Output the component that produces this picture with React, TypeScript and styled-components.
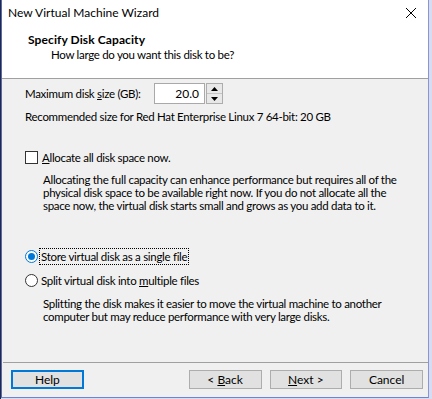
import React from "react";
import styled, { createGlobalStyle } from "styled-components";

const Global = createGlobalStyle`
  html, body { margin: 0; padding: 0; }
  body {
    width: 432px;
    height: 399px;
    overflow: hidden;
    background: #1d2a4b;
    font-family: Lato, "Liberation Sans", sans-serif;
    font-size: 11.5px;
    letter-spacing: -0.3px;
    color: #000;
  }
`;

const Desk = styled.div`
  display: flex;
  width: 432px;
  height: 399px;
  background: linear-gradient(to right, #1d2a4b 0 1px, #d8dcf0 1px);
`;

const Window = styled.div`
  box-sizing: border-box;
  margin-left: 1px;
  width: 428px;
  height: 398px;
  display: flex;
  flex-direction: column;
  background: #f0f0f0;
  border-left: 1px solid #5d6aa6;
  border-right: 1px solid #8a95d8;
  border-bottom: 1px solid #6f82d4;
  white-space: nowrap;
`;

const Header = styled.div`
  box-sizing: border-box;
  height: 79px;
  background: #fff;
  border-bottom: 1px solid #a0a0a0;
`;

const TitleBar = styled.div`
  height: 24px;
  display: flex;
  align-items: center;
  justify-content: space-between;
  padding-left: 6px;
  padding-right: 10px;
  line-height: 15px;
  font-size: 12px;
  letter-spacing: 0;
`;

const CloseBox = styled.div`
  width: 14px;
  height: 14px;
  margin-top: 2px;
  display: flex;
`;

const HeaderTitle = styled.div`
  margin-top: 8px;
  padding-left: 26px;
  font-weight: bold;
  font-size: 12px;
  letter-spacing: 0.1px;
  line-height: 15px;
`;

const HeaderSub = styled.div`
  padding-left: 49px;
  line-height: 15px;
`;

const Content = styled.div`
  flex: 1;
  padding: 0 12px 0 23px;
`;

const SizeRow = styled.div`
  margin-top: 4px;
  height: 21px;
  display: flex;
  align-items: center;
`;

const SizeLabel = styled.span`
  width: 129px;
  flex-shrink: 0;
`;

const NumberBox = styled.div`
  box-sizing: border-box;
  width: 51px;
  height: 21px;
  border: 1px solid #a9a9a9;
  background: #fff;
  text-align: right;
  padding-right: 5px;
  line-height: 19px;
  font-size: 12px;
  letter-spacing: 0;
`;

const Spinner = styled.div`
  box-sizing: border-box;
  width: 17px;
  height: 21px;
  margin-left: 1px;
  border: 1px solid #adadad;
  display: flex;
  flex-direction: column;
`;

const SpinHalf = styled.div<{ $top?: boolean }>`
  flex: 1;
  background: #e8e8e8;
  display: flex;
  align-items: center;
  justify-content: center;
  border-bottom: ${(p) => (p.$top ? "1px solid #c4c4c4" : "none")};
`;

const Text = styled.div<{ $mt: number }>`
  margin-top: ${(p) => p.$mt}px;
  line-height: 15px;
`;

const Para = styled.div<{ $mt: number }>`
  margin-top: ${(p) => p.$mt}px;
  padding-left: 18px;
  line-height: 13px;
`;

const OptionRow = styled.div<{ $mt: number }>`
  margin-top: ${(p) => p.$mt}px;
  height: 17px;
  display: flex;
  align-items: center;
`;

const CheckBox = styled.span`
  box-sizing: border-box;
  flex: none;
  width: 13px;
  height: 13px;
  border: 1px solid #333;
  background: #fff;
  margin-right: 3px;
`;

const Radio = styled.span<{ $on?: boolean }>`
  box-sizing: border-box;
  flex: none;
  width: 13px;
  height: 13px;
  border-radius: 50%;
  border: 1px solid ${(p) => (p.$on ? "#0078d7" : "#333")};
  background: #fff;
  margin-right: 2px;
  display: flex;
  align-items: center;
  justify-content: center;
  &::after {
    content: "";
    display: ${(p) => (p.$on ? "block" : "none")};
    width: 7px;
    height: 7px;
    border-radius: 50%;
    background: #0078d7;
  }
`;

const Label = styled.span<{ $focus?: boolean }>`
  line-height: 15px;
  padding: 0 1px;
  outline: ${(p) => (p.$focus ? "1px dotted #000" : "none")};
`;

const U = styled.span`
  text-decoration: underline;
`;

const Footer = styled.div`
  box-sizing: border-box;
  height: 35px;
  border-top: 1px solid #a0a0a0;
  margin-left: 1px;
  padding: 7px 5px 0 8px;
  display: flex;
  align-items: flex-start;
`;

const Button = styled.button<{ $def?: boolean; $ml?: number }>`
  box-sizing: border-box;
  width: 73px;
  height: 19px;
  margin-left: ${(p) => p.$ml ?? 0}px;
  padding: 0;
  font: inherit;
  font-size: 12px;
  letter-spacing: 0;
  line-height: 15px;
  color: #000;
  background: #e1e1e1;
  border: ${(p) => (p.$def ? "2px solid #0078d7" : "1px solid #adadad")};
`;

function Arrow({ up }: { up?: boolean }) {
  return (
    <svg width="7" height="4" viewBox="0 0 7 4">
      <polygon points={up ? "3.5,0 7,4 0,4" : "0,0 7,0 3.5,4"} fill="#000" />
    </svg>
  );
}

export default function App() {
  return (
    <>
      <Global />
      <Desk>
        <Window>
          <Header>
            <TitleBar>
              <span>New Virtual Machine Wizard</span>
              <CloseBox>
                <svg width="14" height="14" viewBox="0 0 14 14">
                  <path d="M2 2 L12 12 M12 2 L2 12" stroke="#000" strokeWidth="1" />
                </svg>
              </CloseBox>
            </TitleBar>
            <HeaderTitle>Specify Disk Capacity</HeaderTitle>
            <HeaderSub>How large do you want this disk to be?</HeaderSub>
          </Header>
          <Content>
            <SizeRow>
              <SizeLabel>
                Maximum disk <U>s</U>ize (GB):
              </SizeLabel>
              <NumberBox>20.0</NumberBox>
              <Spinner>
                <SpinHalf $top>
                  <Arrow up />
                </SpinHalf>
                <SpinHalf>
                  <Arrow />
                </SpinHalf>
              </Spinner>
            </SizeRow>
            <Text $mt={5}>Recommended size for Red Hat Enterprise Linux 7 64-bit: 20 GB</Text>
            <OptionRow $mt={25}>
              <CheckBox />
              <Label>
                <U>A</U>llocate all disk space now.
              </Label>
            </OptionRow>
            <Para $mt={7}>
              Allocating the full capacity can enhance performance but requires all of the
              <br />
              physical disk space to be available right now. If you do not allocate all the
              <br />
              space now, the virtual disk starts small and grows as you add data to it.
            </Para>
            <OptionRow $mt={36}>
              <Radio $on />
              <Label $focus>Store virtual disk as a single file</Label>
            </OptionRow>
            <OptionRow $mt={7}>
              <Radio />
              <Label>
                Split virtual disk into <U>m</U>ultiple files
              </Label>
            </OptionRow>
            <Para $mt={8}>
              Splitting the disk makes it easier to move the virtual machine to another
              <br />
              computer but may reduce performance with very large disks.
            </Para>
          </Content>
          <Footer>
            <Button $def>Help</Button>
            <Button $ml={105}>
              &lt; <U>B</U>ack
            </Button>
            <Button $ml={8}>
              <U>N</U>ext &gt;
            </Button>
            <Button $ml={8}>Cancel</Button>
          </Footer>
        </Window>
      </Desk>
    </>
  );
}
